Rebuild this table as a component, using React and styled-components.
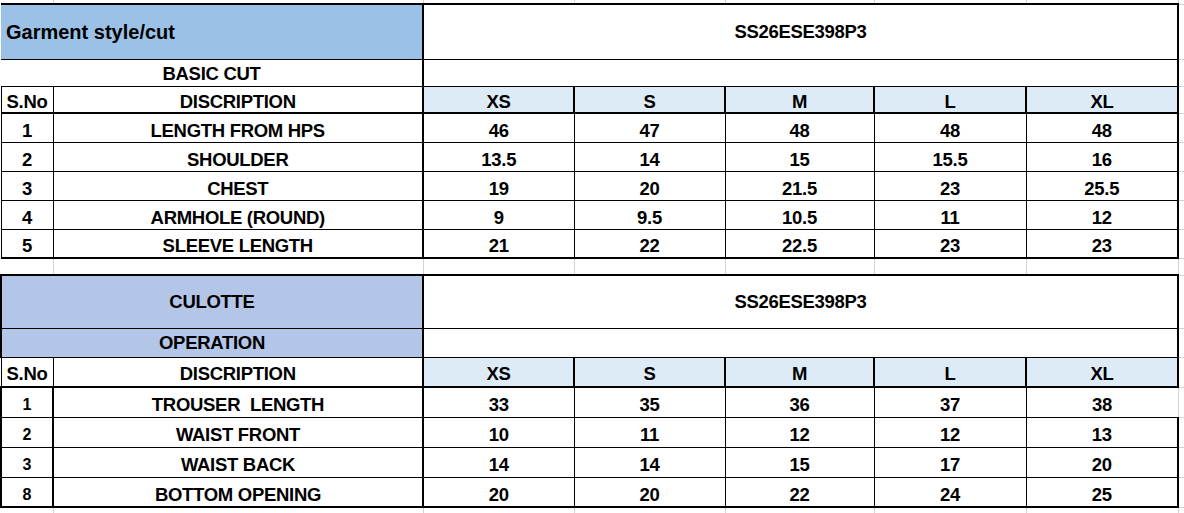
import React from 'react';
import styled, { createGlobalStyle } from 'styled-components';

const GlobalStyle = createGlobalStyle`
  html, body {
    margin: 0;
    padding: 0;
    background: #ffffff;
  }
  body {
    font-family: "Liberation Sans", Arial, sans-serif;
    color: #000;
    overflow: hidden;
  }
`;

const LINES = {
  thick: '2px solid #000',
  thin: '1px solid #000',
  grid: '1px solid #d4d4d4',
  none: 'none',
};

const Sheet = styled.table`
  border-collapse: collapse;
  table-layout: fixed;
  width: 1184px;
`;

const Col = styled.col`
  width: ${(p) => p.$w}px;
`;

const Row = styled.tr`
  height: ${(p) => p.$h}px;
`;

const Cell = styled.td`
  padding: ${(p) => p.$pt || 0}px 0 0 ${(p) => (p.$align === 'left' ? 5 : 0)}px;
  vertical-align: middle;
  text-align: ${(p) => p.$align || 'center'};
  background: ${(p) => p.$bg || 'transparent'};
  font-weight: 700;
  font-size: ${(p) => p.$fs || 18.5}px;
  letter-spacing: ${(p) => (p.$fs ? 0 : -0.3)}px;
  line-height: 20px;
  white-space: pre;
  overflow: hidden;
  border-top: ${(p) => LINES[p.$t || 'none']};
  border-left: ${(p) => LINES[p.$l || 'none']};
  border-right: ${(p) => LINES[p.$r || 'grid']};
  border-bottom: ${(p) => LINES[p.$b || 'grid']};
`;

const BLUE_TITLE = '#9bc2e6';
const BLUE_CULOTTE = '#b4c6e7';
const BLUE_HEAD = '#ddebf7';

const COLS = [52, 370, 151, 151, 149, 152, 152, 7];
const SIZES = ['XS', 'S', 'M', 'L', 'XL'];

const basicRows = [
  ['1', 'LENGTH FROM HPS', '46', '47', '48', '48', '48'],
  ['2', 'SHOULDER', '13.5', '14', '15', '15.5', '16'],
  ['3', 'CHEST', '19', '20', '21.5', '23', '25.5'],
  ['4', 'ARMHOLE (ROUND)', '9', '9.5', '10.5', '11', '12'],
  ['5', 'SLEEVE LENGTH', '21', '22', '22.5', '23', '23'],
];

const culotteRows = [
  ['1', 'TROUSER  LENGTH', '33', '35', '36', '37', '38'],
  ['2', 'WAIST FRONT', '10', '11', '12', '12', '13'],
  ['3', 'WAIST BACK', '14', '14', '15', '17', '20'],
  ['8', 'BOTTOM OPENING', '20', '20', '22', '24', '25'],
];

const Gutter = () => <Cell $r="none" />;

const StripRow = ({ h, bottom }) => (
  <Row $h={h}>
    {COLS.slice(0, 7).map((_, i) => (
      <Cell key={i} $b={bottom} />
    ))}
    <Cell $r="none" $b={bottom === 'none' ? 'none' : 'grid'} />
  </Row>
);

const TitleRow = ({ h, label, code, bg, align, leftEdge, labelSize }) => (
  <Row $h={h}>
    <Cell
      colSpan={2}
      $bg={bg}
      $align={align}
      $r="thick"
      $b="thin"
      $l={leftEdge}
      $fs={labelSize}
    >
      {label}
    </Cell>
    <Cell colSpan={5} $r="thick" $b="thin">
      {code}
    </Cell>
    <Gutter />
  </Row>
);

const SubTitleRow = ({ h, label, bg, leftEdge, pt }) => (
  <Row $h={h}>
    <Cell colSpan={2} $bg={bg} $r="thick" $b="thin" $l={leftEdge} $pt={pt}>
      {label}
    </Cell>
    <Cell colSpan={5} $r="thick" $b="thin" />
    <Gutter />
  </Row>
);

const HeaderRow = ({ h, pt }) => (
  <Row $h={h}>
    <Cell $l="thin" $r="thin" $b="thick" $pt={pt}>
      S.No
    </Cell>
    <Cell $r="thick" $b="thick" $pt={pt}>
      DISCRIPTION
    </Cell>
    {SIZES.map((s) => (
      <Cell key={s} $bg={BLUE_HEAD} $r="thick" $b="thick" $pt={pt}>
        {s}
      </Cell>
    ))}
    <Gutter />
  </Row>
);

const DataRow = ({ h, row, last, snoEdge, snoSize, openRight, pt }) => {
  const [sno, desc, ...vals] = row;
  const bottom = last ? 'thick' : 'thin';
  return (
    <Row $h={h}>
      <Cell $l={snoEdge} $r={snoEdge} $b={bottom} $fs={snoSize} $pt={pt}>
        {sno}
      </Cell>
      <Cell $r="thick" $b={bottom} $pt={pt}>
        {desc}
      </Cell>
      {vals.map((v, i) => (
        <Cell
          key={i}
          $r={i === vals.length - 1 ? (openRight ? 'grid' : 'thick') : 'thin'}
          $b={bottom}
          $pt={pt}
        >
          {v}
        </Cell>
      ))}
      <Gutter />
    </Row>
  );
};

export default function App() {
  return (
    <>
      <GlobalStyle />
      <Sheet>
        <colgroup>
          {COLS.map((w, i) => (
            <Col key={i} $w={w} />
          ))}
        </colgroup>
        <tbody>
          <StripRow h={4} bottom="thick" />
          <TitleRow
            h={55}
            label="Garment style/cut"
            code="SS26ESE398P3"
            bg={BLUE_TITLE}
            align="left"
            labelSize={20}
          />
          <SubTitleRow h={27} label="BASIC CUT" pt={3} />
          <HeaderRow h={27} pt={5} />
          {basicRows.map((r, i) => (
            <DataRow
              key={r[0]}
              h={29}
              row={r}
              last={i === basicRows.length - 1}
              snoEdge="thin"
              pt={6}
            />
          ))}
          <StripRow h={17} bottom="thick" />
          <TitleRow
            h={53}
            label="CULOTTE"
            code="SS26ESE398P3"
            bg={BLUE_CULOTTE}
            align="center"
            leftEdge="thick"
          />
          <SubTitleRow h={29} label="OPERATION" bg={BLUE_CULOTTE} leftEdge="thick" />
          <HeaderRow h={30} pt={4} />
          {culotteRows.map((r, i) => (
            <DataRow
              key={r[0]}
              h={30}
              row={r}
              last={i === culotteRows.length - 1}
              snoEdge="thick"
              snoSize={16}
              openRight={i === 0}
              pt={6}
            />
          ))}
          <StripRow h={6} bottom="none" />
        </tbody>
      </Sheet>
    </>
  );
}
